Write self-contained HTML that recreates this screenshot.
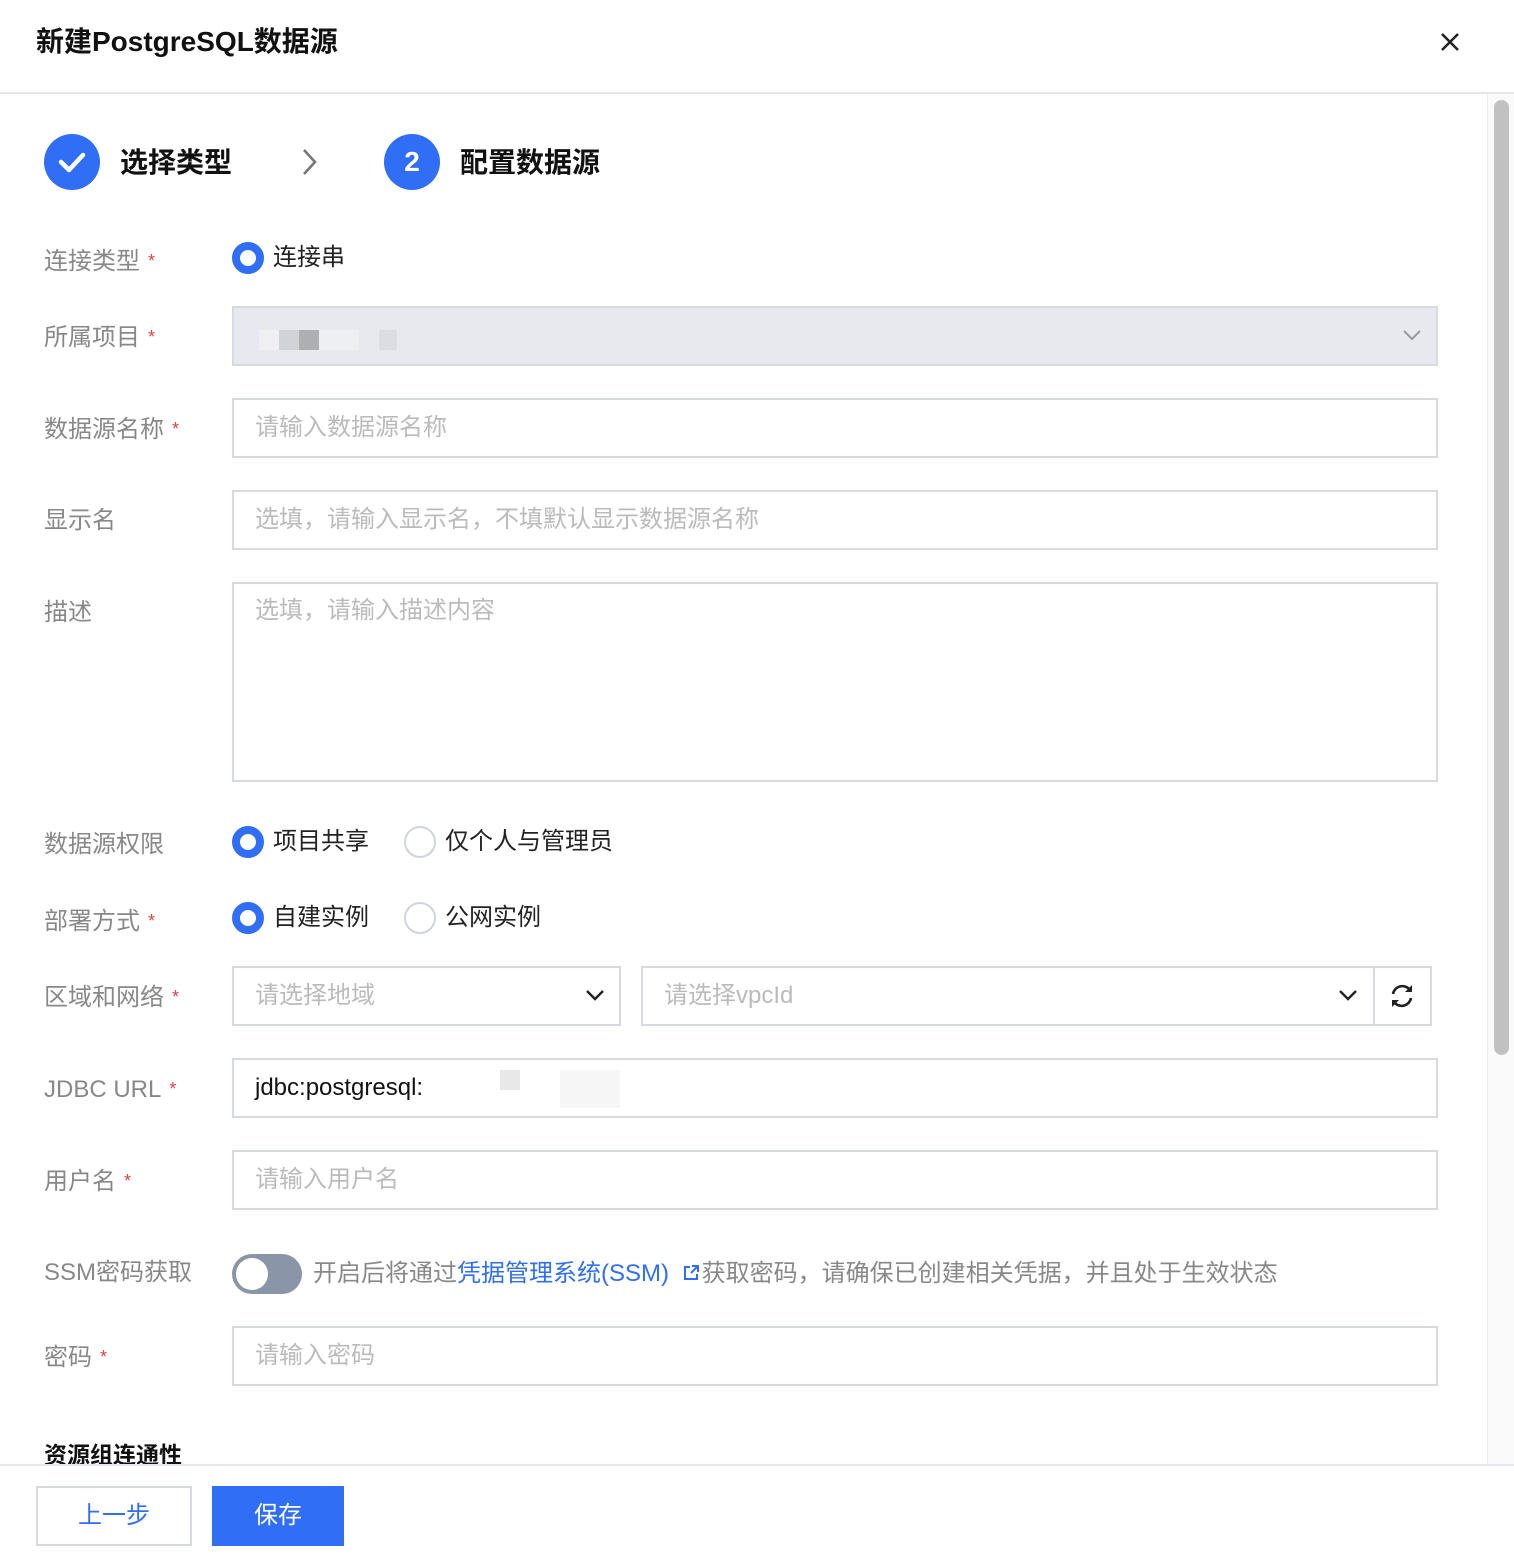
<!DOCTYPE html>
<html><head><meta charset="utf-8"><style>
*{box-sizing:border-box;margin:0;padding:0}
body{width:1514px;height:1562px;background:#fff;font-family:"Liberation Sans","Noto Sans CJK SC",sans-serif;position:relative;overflow:hidden;color:#222}
.a{position:absolute}
.lbl{position:absolute;left:44px;font-size:24px;color:#888;line-height:30px}
.lbl i{color:#e54545;font-style:normal;font-size:18px;margin-left:8px;vertical-align:2px}
.inp{position:absolute;left:232px;width:1206px;height:60px;border:2px solid #d7dae2;font-size:24px;color:#bbb;padding:0 21px;line-height:56px}
.radio{position:absolute;width:32px;height:32px;border-radius:50%}
.on{border:8px solid #2f6ef5;background:#fff}
.off{border:2px solid #d0d4de;background:#fff}
.rt{position:absolute;font-size:24px;color:#222;line-height:30px}
</style></head><body>
<div class="a" style="left:36px;top:24px;font-size:28px;font-weight:bold;line-height:36px;color:#111">新建PostgreSQL数据源</div>
<svg class="a" style="left:1440px;top:32px" width="20" height="20" viewBox="0 0 20 20"><path d="M2 2L18 18M18 2L2 18" stroke="#222" stroke-width="2.6"/></svg>
<div class="a" style="left:0;top:92px;width:1514px;height:2px;background:#e6e7ec"></div>
<div class="a" style="left:1487px;top:94px;width:27px;height:1371px;background:#fafafa;border-left:1px solid #ececec"></div>
<div class="a" style="left:1494px;top:100px;width:15px;height:955px;background:#c1c1c1;border-radius:8px"></div>

<div class="a" style="left:44px;top:134px;width:56px;height:56px;border-radius:50%;background:#2f6ef5"></div>
<svg class="a" style="left:44px;top:134px" width="56" height="56"><path d="M17 28L25 36L39 21" stroke="#fff" stroke-width="4.5" fill="none" stroke-linecap="round" stroke-linejoin="round"/></svg>
<div class="a" style="left:120px;top:144px;font-size:28px;font-weight:bold;line-height:38px;color:#111">选择类型</div>
<svg class="a" style="left:298px;top:146px" width="24" height="32"><path d="M6 4L17 16L6 28" stroke="#777" stroke-width="2.6" fill="none"/></svg>
<div class="a" style="left:384px;top:134px;width:56px;height:56px;border-radius:50%;background:#2f6ef5;color:#fff;font-size:28px;font-weight:bold;text-align:center;line-height:56px">2</div>
<div class="a" style="left:460px;top:144px;font-size:28px;font-weight:bold;line-height:38px;color:#111">配置数据源</div>

<div class="lbl" style="top:246px">连接类型<i>*</i></div>
<div class="radio on" style="left:232px;top:242px"></div><div class="rt" style="left:273px;top:243px">连接串</div>

<div class="lbl" style="top:322px">所属项目<i>*</i></div>
<div class="inp" style="top:306px;background:#e8e9ee;border-color:#d7dae2"></div>
<div class="a" style="left:259px;top:330px;width:20px;height:20px;background:#f0f0f3"></div>
<div class="a" style="left:279px;top:330px;width:20px;height:20px;background:#d2d3d8"></div>
<div class="a" style="left:299px;top:330px;width:20px;height:20px;background:#aeafb3"></div>
<div class="a" style="left:319px;top:330px;width:40px;height:20px;background:#eeeff2"></div>
<div class="a" style="left:379px;top:330px;width:18px;height:20px;background:#dcdde2"></div>
<svg class="a" style="left:1402px;top:328px" width="20" height="14"><path d="M2 3L10 11L18 3" stroke="#999" stroke-width="2" fill="none"/></svg>

<div class="lbl" style="top:414px">数据源名称<i>*</i></div>
<div class="inp" style="top:398px">请输入数据源名称</div>
<div class="lbl" style="top:506px">显示名</div>
<div class="inp" style="top:490px">选填，请输入显示名，不填默认显示数据源名称</div>
<div class="lbl" style="top:598px">描述</div>
<div class="inp" style="top:582px;height:200px;line-height:54px">选填，请输入描述内容</div>

<div class="lbl" style="top:830px">数据源权限</div>
<div class="radio on" style="left:232px;top:826px"></div><div class="rt" style="left:273px;top:827px">项目共享</div>
<div class="radio off" style="left:404px;top:826px"></div><div class="rt" style="left:445px;top:827px">仅个人与管理员</div>

<div class="lbl" style="top:906px">部署方式<i>*</i></div>
<div class="radio on" style="left:232px;top:902px"></div><div class="rt" style="left:273px;top:903px">自建实例</div>
<div class="radio off" style="left:404px;top:902px"></div><div class="rt" style="left:445px;top:903px">公网实例</div>

<div class="lbl" style="top:982px">区域和网络<i>*</i></div>
<div class="inp" style="top:966px;width:389px">请选择地域</div>
<svg class="a" style="left:585px;top:988px" width="20" height="14"><path d="M2 3L10 11L18 3" stroke="#222" stroke-width="2.4" fill="none"/></svg>
<div class="inp" style="top:966px;left:641px;width:734px">请选择vpcId</div>
<svg class="a" style="left:1338px;top:988px" width="20" height="14"><path d="M2 3L10 11L18 3" stroke="#222" stroke-width="2.4" fill="none"/></svg>
<div class="inp" style="top:966px;left:1373px;width:59px"></div>
<svg class="a" style="left:1386px;top:980px" width="32" height="32" viewBox="0 0 32 32"><path d="M7 14A9.5 9.5 0 0 1 24 10M25 18A9.5 9.5 0 0 1 8 22" stroke="#222" stroke-width="2.6" fill="none"/><path d="M26 5V12H19Z" fill="#222"/><path d="M6 27V20H13Z" fill="#222"/></svg>

<div class="lbl" style="top:1074px">JDBC URL<i>*</i></div>
<div class="inp" style="top:1058px;color:#111">jdbc:postgresql:</div>
<div class="a" style="left:500px;top:1070px;width:20px;height:20px;background:#e8e8e8"></div>
<div class="a" style="left:560px;top:1070px;width:60px;height:38px;background:#f6f6f6"></div>

<div class="lbl" style="top:1166px">用户名<i>*</i></div>
<div class="inp" style="top:1150px">请输入用户名</div>

<div class="lbl" style="top:1258px">SSM密码获取</div>
<div class="a" style="left:232px;top:1254px;width:70px;height:40px;border-radius:20px;background:#8a96a8"></div>
<div class="a" style="left:236px;top:1258px;width:32px;height:32px;border-radius:50%;background:#fff"></div>
<div class="a" style="left:313px;top:1259px;font-size:24px;line-height:30px;color:#888;white-space:nowrap">开启后将通过<span style="color:#2f6ef5">凭据管理系统(SSM)</span> <svg width="18" height="18" viewBox="0 0 18 18" style="vertical-align:-1px;margin:0 2px 0 6px"><path d="M8 3H3V15H15V10M10 2H16V8M16 2L9 9" stroke="#2f6ef5" stroke-width="2" fill="none"/></svg>获取密码，请确保已创建相关凭据，并且处于生效状态</div>

<div class="lbl" style="top:1342px">密码<i>*</i></div>
<div class="inp" style="top:1326px">请输入密码</div>

<div class="a" style="left:44px;top:1440px;height:24px;overflow:hidden;font-size:23px;font-weight:bold;line-height:30px;color:#111">资源组连通性</div>
<div class="a" style="left:0;top:1464px;width:1514px;height:2px;background:#e6e7ec"></div>
<div class="a" style="left:36px;top:1486px;width:156px;height:60px;border:2px solid #d7dae2;color:#2f6ef5;font-size:24px;text-align:center;line-height:56px">上一步</div>
<div class="a" style="left:212px;top:1486px;width:132px;height:60px;background:#2f6ef5;color:#fff;font-size:24px;text-align:center;line-height:60px">保存</div>
</body></html>
